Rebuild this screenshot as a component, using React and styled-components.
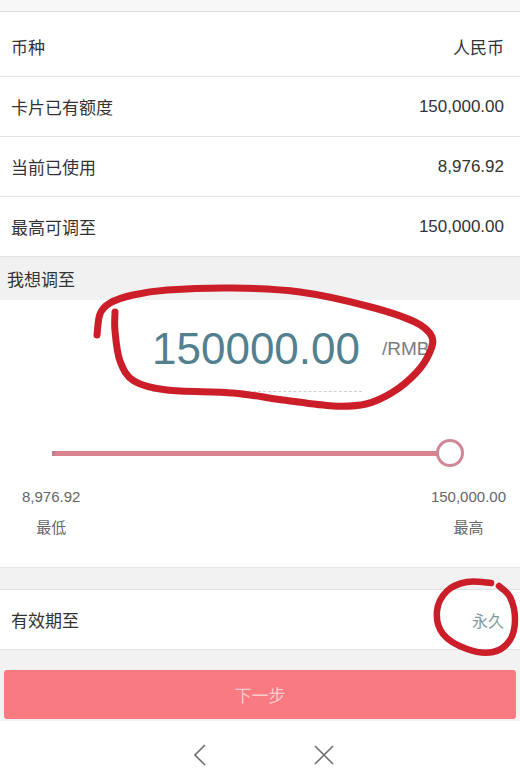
import React from 'react';
import styled, { createGlobalStyle } from 'styled-components';

const GlobalStyle = createGlobalStyle`
  body {
    margin: 0;
    background: #ffffff;
    font-family: "Liberation Sans", "Noto Sans CJK SC", sans-serif;
    color: #333;
  }
  * { box-sizing: border-box; }
`;

const Page = styled.div`
  position: relative;
  width: 520px;
  min-height: 781px;
  overflow: hidden;
  background: #fff;
`;

const TopStrip = styled.div`
  height: 12px;
  background: #f7f7f7;
  border-bottom: 1px solid #dcdcdc;
`;

const InfoList = styled.div`
  background: #fff;
  padding-top: 5px;
`;

const Row = styled.div`
  display: flex;
  align-items: center;
  justify-content: space-between;
  height: 60px;
  padding: 0 16px 0 11px;
  border-bottom: 1px solid #e4e4e4;
  background: #fff;
  font-size: 17px;
  color: #333;
`;

const Value = styled.span`
  color: ${p => p.tint || '#333'};
  font-size: ${p => (p.small ? '16px' : '17px')};
`;

const SectionHeader = styled.div`
  display: flex;
  align-items: center;
  height: 43px;
  padding-left: 7px;
  background: #f1f1f1;
  font-size: 17px;
  color: #333;
`;

const AmountPanel = styled.section`
  background: #fff;
  padding: 24px 0 29px;
`;

const AmountRow = styled.div`
  display: grid;
  grid-template-columns: 1fr auto 1fr;
  align-items: start;
`;

const Amount = styled.div`
  grid-column: 2;
  font-size: 44px;
  line-height: 50px;
  color: #52808f;
  padding: 0 2px 17px 0;
  margin-left: -6px;
  border-bottom: 1px dashed #cfcfcf;
`;

const Unit = styled.span`
  grid-column: 3;
  padding-left: 20px;
  font-size: 19px;
  line-height: 50px;
  color: #7c7c7c;
`;

const Slider = styled.div`
  display: flex;
  align-items: center;
  height: 30px;
  margin: 46px 56px 0 52px;
`;

const Track = styled.div`
  flex: 1;
  height: 5px;
  margin-right: -2px;
  background: #d9838f;
  border-left: 3px solid #b9828c;
`;

const Thumb = styled.div`
  width: 28px;
  height: 28px;
  border-radius: 50%;
  border: 3px solid #cf8898;
  background: #fff;
`;

const Limits = styled.div`
  display: flex;
  justify-content: space-between;
  padding: 0 14px 0 22px;
  margin-top: 19px;
`;

const Limit = styled.div`
  display: flex;
  flex-direction: column;
  align-items: center;
  gap: 11px;
  font-size: 15px;
  line-height: 20px;
  color: #666;
`;

const Gap = styled.div`
  height: ${p => p.h}px;
  background: #f2f2f2;
  border-top: 1px solid #e6e6e6;
  border-bottom: 1px solid #e2e2e2;
`;

const ButtonArea = styled.div`
  padding: 20px 4px 2px;
  background: #f2f2f2;
`;

const NextButton = styled.button`
  display: block;
  width: 100%;
  height: 49px;
  border: none;
  border-radius: 3px;
  background: #f97a80;
  color: #f9cbcf;
  font-family: inherit;
  font-size: 17px;
`;

const BottomNav = styled.nav`
  display: flex;
  justify-content: center;
  align-items: center;
  gap: 108px;
  height: 68px;
  padding-left: 8px;
  background: #fff;
`;

const NavIcon = styled.svg`
  width: ${p => p.w}px;
  height: 22px;
  stroke: #6f6f6f;
  stroke-width: 1.6;
  fill: none;
`;

const Scribble = styled.svg`
  position: absolute;
  top: 0;
  left: 0;
  width: 520px;
  height: 781px;
  pointer-events: none;
`;

// catmull-rom through the points, so the pen marks stay smooth
const smooth = pts => {
  let d = `M${pts[0][0]},${pts[0][1]}`;
  for (let i = 0; i < pts.length - 1; i++) {
    const p0 = pts[i - 1] || pts[i];
    const p1 = pts[i];
    const p2 = pts[i + 1];
    const p3 = pts[i + 2] || p2;
    const c1 = [p1[0] + (p2[0] - p0[0]) / 6, p1[1] + (p2[1] - p0[1]) / 6];
    const c2 = [p2[0] - (p3[0] - p1[0]) / 6, p2[1] - (p3[1] - p1[1]) / 6];
    d += ` C${c1[0]},${c1[1]} ${c2[0]},${c2[1]} ${p2[0]},${p2[1]}`;
  }
  return d;
};

const bigLoop = [
  [97, 335], [100, 314], [110, 303], [133, 295], [167, 290], [233, 288],
  [300, 292], [367, 306], [415, 322], [432, 337], [429, 354], [416, 373],
  [393, 392], [366, 404], [333, 406], [283, 400], [233, 393], [167, 390],
  [134, 381], [120, 361], [115, 331], [115, 312]
];

const smallLoop = [
  [491, 583], [467, 582], [447, 591], [437, 611], [443, 634], [467, 649],
  [493, 652], [510, 640], [515, 619], [510, 597], [499, 586]
];

const infoRows = [
  { label: '币种', value: '人民币' },
  { label: '卡片已有额度', value: '150,000.00' },
  { label: '当前已使用', value: '8,976.92' },
  { label: '最高可调至', value: '150,000.00' }
];

export default function App() {
  return (
    <Page>
      <GlobalStyle />
      <TopStrip />
      <InfoList>
        {infoRows.map(r => (
          <Row key={r.label}>
            <span>{r.label}</span>
            <Value>{r.value}</Value>
          </Row>
        ))}
      </InfoList>

      <SectionHeader>我想调至</SectionHeader>

      <AmountPanel>
        <AmountRow>
          <Amount>150000.00</Amount>
          <Unit>/RMB</Unit>
        </AmountRow>
        <Slider>
          <Track />
          <Thumb />
        </Slider>
        <Limits>
          <Limit>
            <span>8,976.92</span>
            <span>最低</span>
          </Limit>
          <Limit>
            <span>150,000.00</span>
            <span>最高</span>
          </Limit>
        </Limits>
      </AmountPanel>

      <Gap h={23} />
      <Row>
        <span>有效期至</span>
        <Value tint="#7d9a9c" small>永久</Value>
      </Row>

      <ButtonArea>
        <NextButton>下一步</NextButton>
      </ButtonArea>

      <BottomNav>
        <NavIcon w={12} viewBox="0 0 12 22">
          <path d="M11 1 L1 11 L11 21" />
        </NavIcon>
        <NavIcon w={20} viewBox="0 0 20 22">
          <path d="M1 2 L19 20 M19 2 L1 20" />
        </NavIcon>
      </BottomNav>

      <Scribble viewBox="0 0 520 781">
        <g
          fill="none"
          stroke="#c8121c"
          strokeLinecap="round"
          strokeLinejoin="round"
          opacity="0.95"
        >
          <path d={smooth(bigLoop)} strokeWidth="7" />
          <path d={smooth(smallLoop)} strokeWidth="6.5" />
        </g>
      </Scribble>
    </Page>
  );
}
